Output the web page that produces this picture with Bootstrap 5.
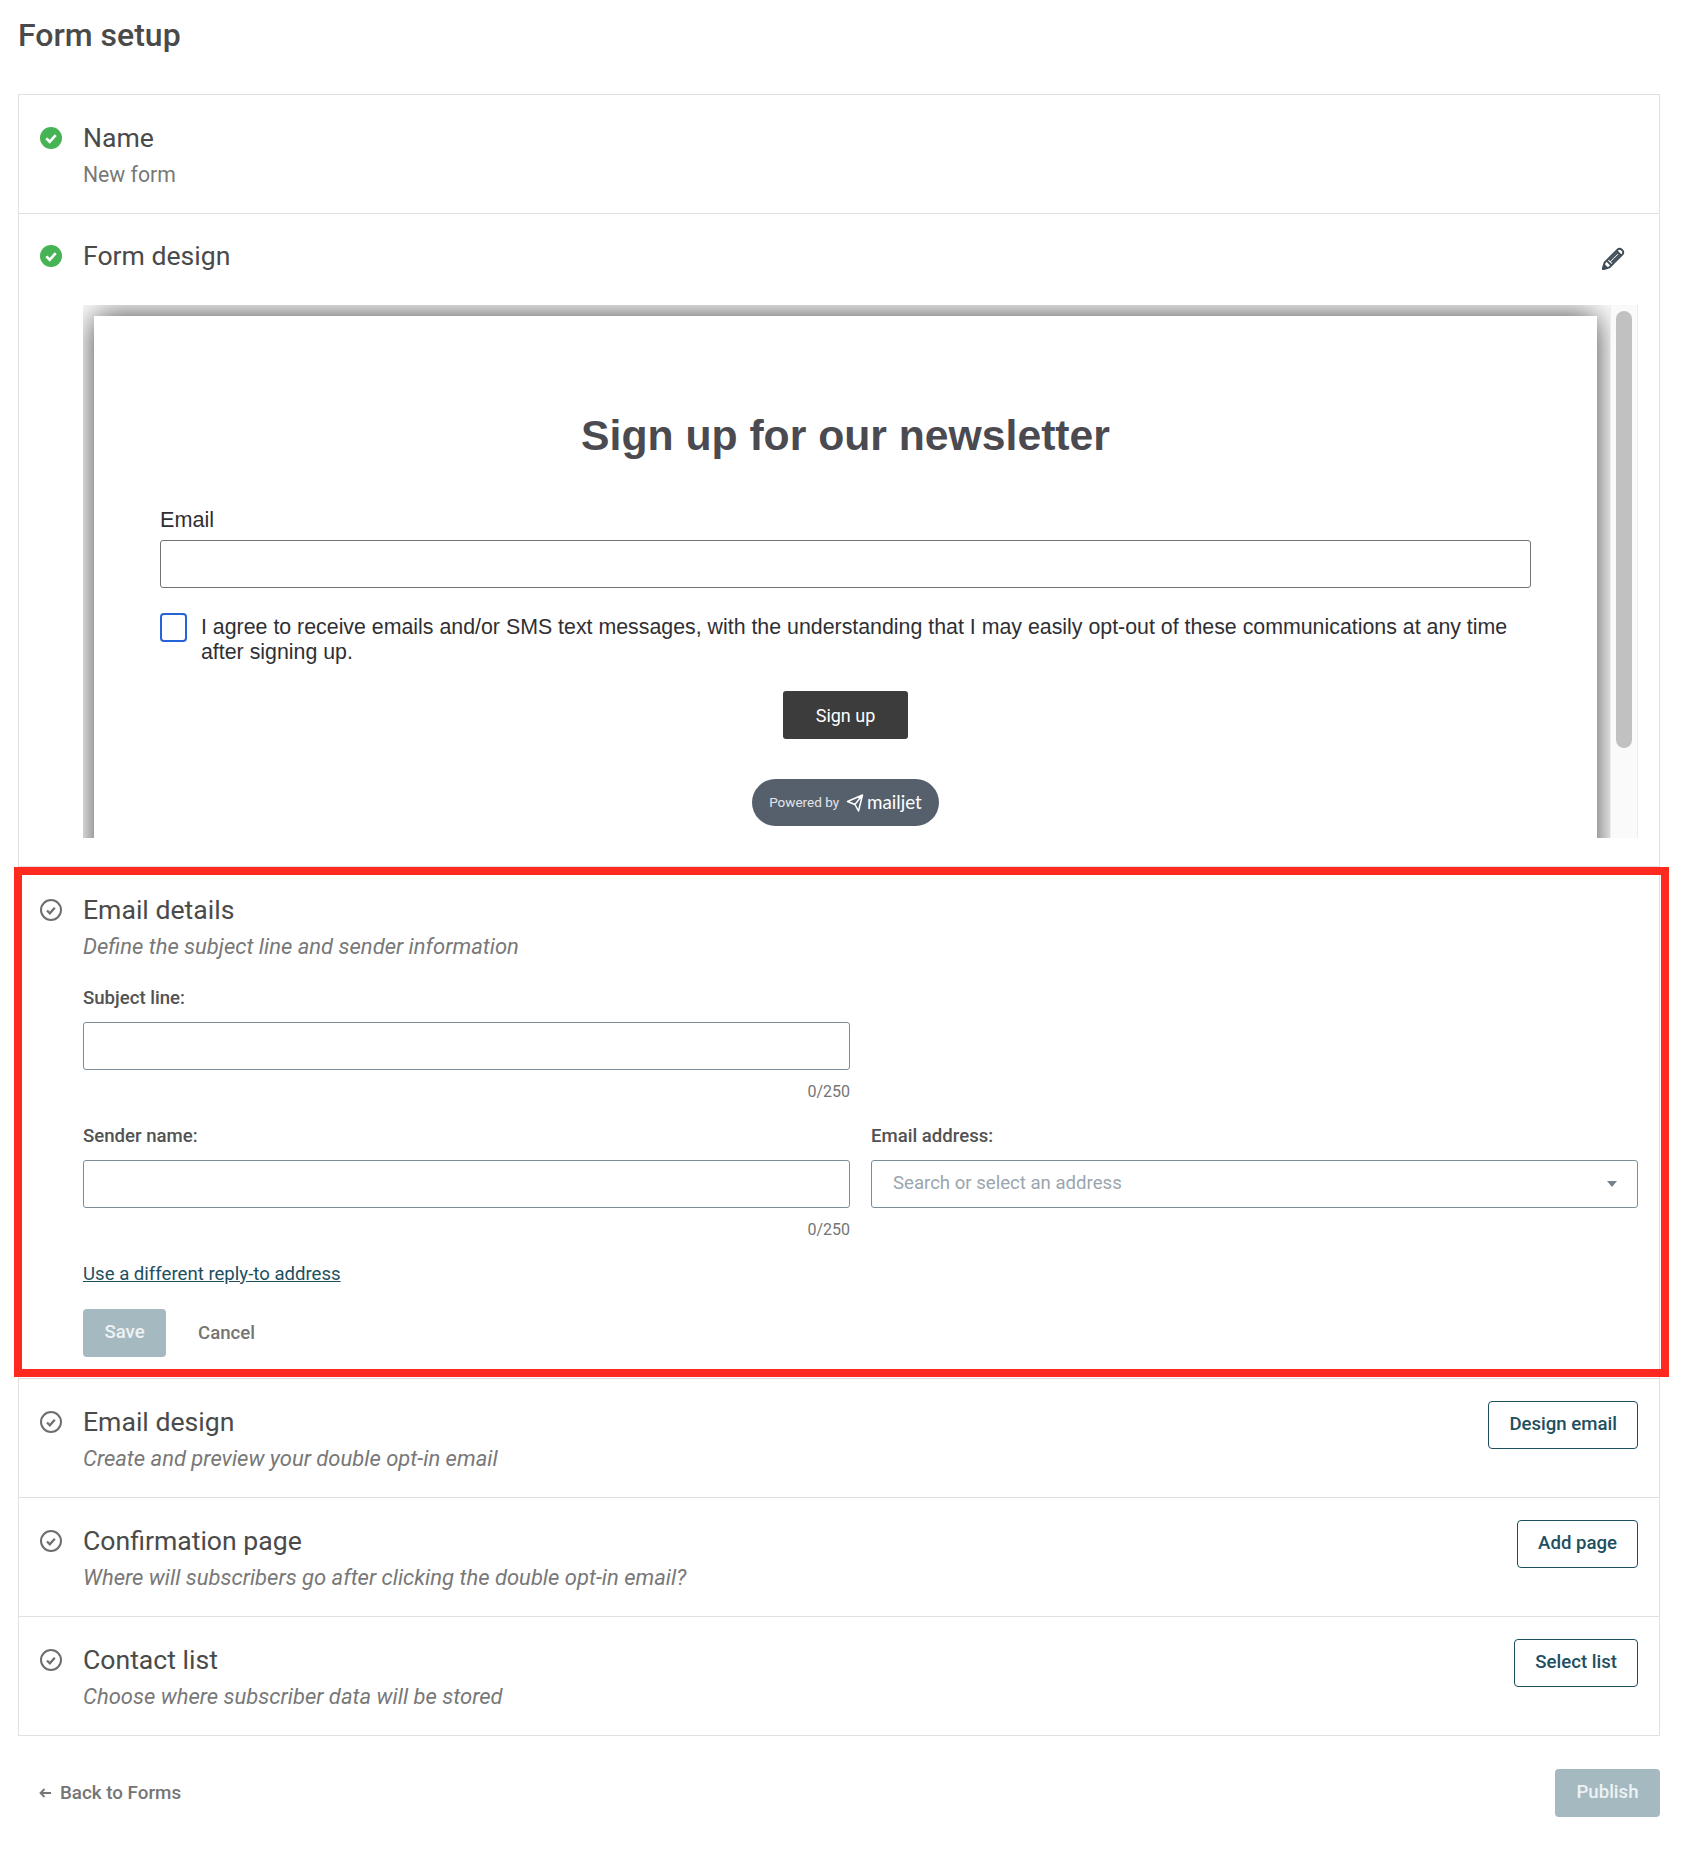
<!DOCTYPE html>
<html lang="en">
<head>
  <meta charset="UTF-8" />
  <meta name="viewport" content="width=device-width, initial-scale=1.0" />
  <title>Form setup</title>
  <link href="https://cdn.jsdelivr.net/npm/bootstrap@5.3.0/dist/css/bootstrap.min.css" rel="stylesheet" />
  <style>
    body {
      font-family: Roboto, "Liberation Sans", sans-serif;
      color: #4a4a4a;
      background: #fff;
      padding: 0 22px 43px 18px;
    }
    .page-title {
      font-size: 32px;
      font-weight: 500;
      line-height: 36px;
      color: #4a4a4a;
      margin: 0;
      padding: 17px 0 41px;
    }
    .setup-wrap { position: relative; }
    .setup-list { border: 1px solid #e0e0e0; }
    .setup-row { border-top: 1px solid #e0e0e0; padding: 24px 21px 21px 21px; }
    .setup-row:first-child { border-top: 0; }
    .setup-row.row-design { padding-top: 23px; padding-bottom: 22px; }
    .step-icon { width: 22px; height: 22px; flex: none; margin: 8px 21px 0 0; display: block; }
    .step-title { font-size: 26.6px; line-height: 38px; color: #4a4a4a; margin: 0; font-weight: 400; }
    .step-sub { font-size: 21.2px; line-height: 34px; color: #787878; margin: 1px 0 0; }
    .step-sub.hint { font-size: 22px; font-style: italic; }
    .edit-pencil { width: 24px; height: 24px; margin: 10px 13px 0 0; display: block; }

    .preview-box { height: 533px; margin: 30px 0 6px 43px; overflow: hidden; }
    .preview-stage { padding: 11px 13px 0 11px; overflow: hidden; flex: 1 1 auto; min-width: 0; }
    .preview-page {
      background: #fff;
      box-shadow: 0 0 30px rgba(0, 0, 0, .75);
      height: 640px;
      padding: 92px 66px 0;
      font-family: "Liberation Sans", Arial, sans-serif;
      color: #2f2f33;
    }
    .preview-heading { font-size: 42.7px; font-weight: 700; line-height: 54px; text-align: center; color: #4a4a50; margin: 0 0 44px; }
    .preview-label { font-size: 21.6px; line-height: 28px; margin-bottom: 6px; }
    .preview-input { height: 48px; border: 1px solid #6f7479; border-radius: 3px; margin-bottom: 25px; }
    .preview-check.form-check-input {
      width: 27px; height: 29px; margin: 0 14px 0 0; flex: none;
      border: 2px solid #2563d8; border-radius: 4px; float: none;
    }
    .preview-consent { font-size: 21.35px; line-height: 25px; margin: 2px 0 0; padding-right: 20px; }
    .signup-btn {
      width: 125px; height: 48px; background: #3c3c3c; color: #fff; border: 0; border-radius: 3px;
      font: 400 18px Roboto, sans-serif; padding: 0; margin-top: 26px;
    }
    .powered-pill {
      width: 187px; height: 47px; margin-top: 40px; border-radius: 24px; background: #56606c; color: #e3e6ea;
      font-family: Roboto, sans-serif; font-size: 13.5px;
    }
    .pill-plane { margin: 0 3px 0 7px; }
    .mailjet-word { font-family: Lato, sans-serif; font-size: 18.8px; font-weight: 400; color: #fff; line-height: 1; }
    .scroll-track { width: 28px; flex: none; background: #fafafa; border: solid #ececec; border-width: 0 1px; padding: 6px 5px 0; }
    .scroll-thumb { width: 16px; height: 437px; background: #c1c1c1; border-radius: 8px; }

    .field-label { font-size: 18.6px; font-weight: 500; line-height: 28px; color: #525252; margin: 0 0 10px; display: block; }
    .field-input.form-control {
      height: 48px; border: 1px solid #7b8d99; border-radius: 3px; font-size: 18.6px; padding: 0 21px; color: #9aa5ad;
    }
    .field-count { font-size: 16px; line-height: 24px; color: #757575; text-align: right; margin-top: 10px; }
    .field-row { --bs-gutter-x: 21px; }
    .subject-row { margin-top: 20px; }
    .sender-row { margin-top: 18px; }
    .select-caret { width: 0; height: 0; border: 5.5px solid transparent; border-top: 6px solid #75838e; border-bottom: 0; margin-right: -1px; }
    .reply-link { font-size: 18.6px; line-height: 28px; color: #1e4f5f; text-decoration: underline; display: inline-block; margin-top: 18px; }
    .form-actions { margin-top: 21px; }
    .save-btn, .publish-btn {
      background: #a5b9c0; color: #eef2f4; border: 0; border-radius: 4px; height: 48px; font-size: 18.6px; font-weight: 500; padding: 0;
    }
    .save-btn { width: 83px; }
    .publish-btn { width: 105px; }
    .cancel-btn { font-size: 18.6px; font-weight: 500; color: #757575; margin-left: 32px; line-height: 48px; text-decoration: none; }
    .outline-teal {
      border: 1px solid #1e4f5f; color: #1e4f5f; background: #fff; border-radius: 4px; height: 48px;
      font-size: 18.6px; font-weight: 500; padding: 0 20px; flex: none; margin-top: -2px;
    }
    .back-link { font-size: 18.8px; font-weight: 500; color: #757575; text-decoration: none; margin-left: 21px; gap: 9px; }
    .page-foot { margin-top: 33px; }

    .red-outline {
      position: absolute;
      top: 773px;
      left: -4px;
      width: 1655px;
      height: 510px;
      border: 8px solid #ff2a1f;
      pointer-events: none;
    }
  </style>
</head>
<body>
  <h1 class="page-title">Form setup</h1>

  <div class="setup-wrap">
    <div class="setup-list">
      <!-- Name -->
      <div class="setup-row d-flex">
        <svg class="step-icon" viewBox="0 0 22 22"><circle cx="11" cy="11" r="11" fill="#46b354"/><path d="M6.3 11.4l3.4 3.4 6-6.6" fill="none" stroke="#fff" stroke-width="2.7"/></svg>
        <div>
          <p class="step-title">Name</p>
          <p class="step-sub">New form</p>
        </div>
      </div>

      <!-- Form design -->
      <div class="setup-row row-design">
        <div class="d-flex">
          <svg class="step-icon" viewBox="0 0 22 22"><circle cx="11" cy="11" r="11" fill="#46b354"/><path d="M6.3 11.4l3.4 3.4 6-6.6" fill="none" stroke="#fff" stroke-width="2.7"/></svg>
          <p class="step-title flex-grow-1">Form design</p>
          <svg class="edit-pencil" viewBox="0 0 24 24" fill="none" stroke="#3f4c57" stroke-width="2" stroke-linejoin="round"><path d="M2 22l1.6-6.4L16.6 2.6a2.8 2.8 0 0 1 4 0l.8.8a2.8 2.8 0 0 1 0 4L8.4 20.4z"/><path d="M5.8 13.6l4.6 4.6M8.5 13.5l8.8-8.8M10.5 15.5l8.8-8.8M15.4 3.8l4.8 4.8"/><path d="M2 22l1-4 3 3z" fill="#3f4c57"/></svg>
        </div>
        <div class="d-flex preview-box">
          <div class="preview-stage">
            <div class="preview-page">
              <h2 class="preview-heading">Sign up for our newsletter</h2>
              <div class="preview-label">Email</div>
              <div class="preview-input"></div>
              <div class="d-flex">
                <input class="form-check-input preview-check" type="checkbox" aria-label="Agree" />
                <p class="preview-consent">I agree to receive emails and/or SMS text messages, with the understanding that I may easily opt-out of these communications at any time after signing up.</p>
              </div>
              <div class="text-center"><button class="signup-btn" type="button">Sign up</button></div>
              <div class="powered-pill d-flex align-items-center justify-content-center mx-auto">
                <span>Powered by</span>
                <svg class="pill-plane" width="18" height="18" viewBox="0 0 17 18" fill="none" stroke="#fff" stroke-width="1.5" stroke-linejoin="round"><path d="M1 7.5L16 1l-4 16-3.6-6.5zM8.4 10.5L16 1"/></svg>
                <span class="mailjet-word">mailjet</span>
              </div>
            </div>
          </div>
          <div class="scroll-track"><div class="scroll-thumb"></div></div>
        </div>
      </div>

      <!-- Email details -->
      <div class="setup-row d-flex">
        <svg class="step-icon" viewBox="0 0 22 22"><circle cx="11" cy="11" r="10" fill="none" stroke="#6e6e6e" stroke-width="2"/><path d="M7 11.5l2.8 2.8 5-5.6" fill="none" stroke="#6e6e6e" stroke-width="2.2"/></svg>
        <div class="flex-grow-1">
          <p class="step-title">Email details</p>
          <p class="step-sub hint">Define the subject line and sender information</p>
          <div class="row field-row subject-row">
            <div class="col-6">
              <label class="field-label">Subject line:</label>
              <input class="form-control field-input" type="text" />
              <div class="field-count">0/250</div>
            </div>
          </div>
          <div class="row field-row sender-row">
            <div class="col-6">
              <label class="field-label">Sender name:</label>
              <input class="form-control field-input" type="text" />
              <div class="field-count">0/250</div>
            </div>
            <div class="col-6">
              <label class="field-label">Email address:</label>
              <div class="form-control field-input d-flex align-items-center justify-content-between">
                <span>Search or select an address</span>
                <span class="select-caret"></span>
              </div>
            </div>
          </div>
          <a class="reply-link" href="#">Use a different reply-to address</a>
          <div class="d-flex form-actions">
            <button class="save-btn" type="button" disabled>Save</button>
            <a class="cancel-btn" href="#">Cancel</a>
          </div>
        </div>
      </div>

      <!-- Remaining steps -->
      <div class="setup-row d-flex align-items-start">
        <svg class="step-icon" viewBox="0 0 22 22"><circle cx="11" cy="11" r="10" fill="none" stroke="#6e6e6e" stroke-width="2"/><path d="M7 11.5l2.8 2.8 5-5.6" fill="none" stroke="#6e6e6e" stroke-width="2.2"/></svg>
        <div class="flex-grow-1">
          <p class="step-title">Email design</p>
          <p class="step-sub hint">Create and preview your double opt-in email</p>
        </div>
        <button class="outline-teal" type="button">Design email</button>
      </div>
      <div class="setup-row d-flex align-items-start">
        <svg class="step-icon" viewBox="0 0 22 22"><circle cx="11" cy="11" r="10" fill="none" stroke="#6e6e6e" stroke-width="2"/><path d="M7 11.5l2.8 2.8 5-5.6" fill="none" stroke="#6e6e6e" stroke-width="2.2"/></svg>
        <div class="flex-grow-1">
          <p class="step-title">Confirmation page</p>
          <p class="step-sub hint">Where will subscribers go after clicking the double opt-in email?</p>
        </div>
        <button class="outline-teal" type="button">Add page</button>
      </div>
      <div class="setup-row d-flex align-items-start">
        <svg class="step-icon" viewBox="0 0 22 22"><circle cx="11" cy="11" r="10" fill="none" stroke="#6e6e6e" stroke-width="2"/><path d="M7 11.5l2.8 2.8 5-5.6" fill="none" stroke="#6e6e6e" stroke-width="2.2"/></svg>
        <div class="flex-grow-1">
          <p class="step-title">Contact list</p>
          <p class="step-sub hint">Choose where subscriber data will be stored</p>
        </div>
        <button class="outline-teal" type="button">Select list</button>
      </div>
    </div>
    <div class="red-outline"></div>
  </div>

  <div class="page-foot d-flex align-items-center justify-content-between">
    <a class="back-link d-flex align-items-center" href="#">
      <svg width="12" height="10" viewBox="0 0 12 10" fill="none" stroke="#757575" stroke-width="1.8"><path d="M12 5H2M5.5 1L1.5 5l4 4"/></svg>
      <span>Back to Forms</span>
    </a>
    <button class="publish-btn" type="button" disabled>Publish</button>
  </div>

  <script src="https://cdn.jsdelivr.net/npm/bootstrap@5.3.0/dist/js/bootstrap.bundle.min.js"></script>
</body>
</html>
